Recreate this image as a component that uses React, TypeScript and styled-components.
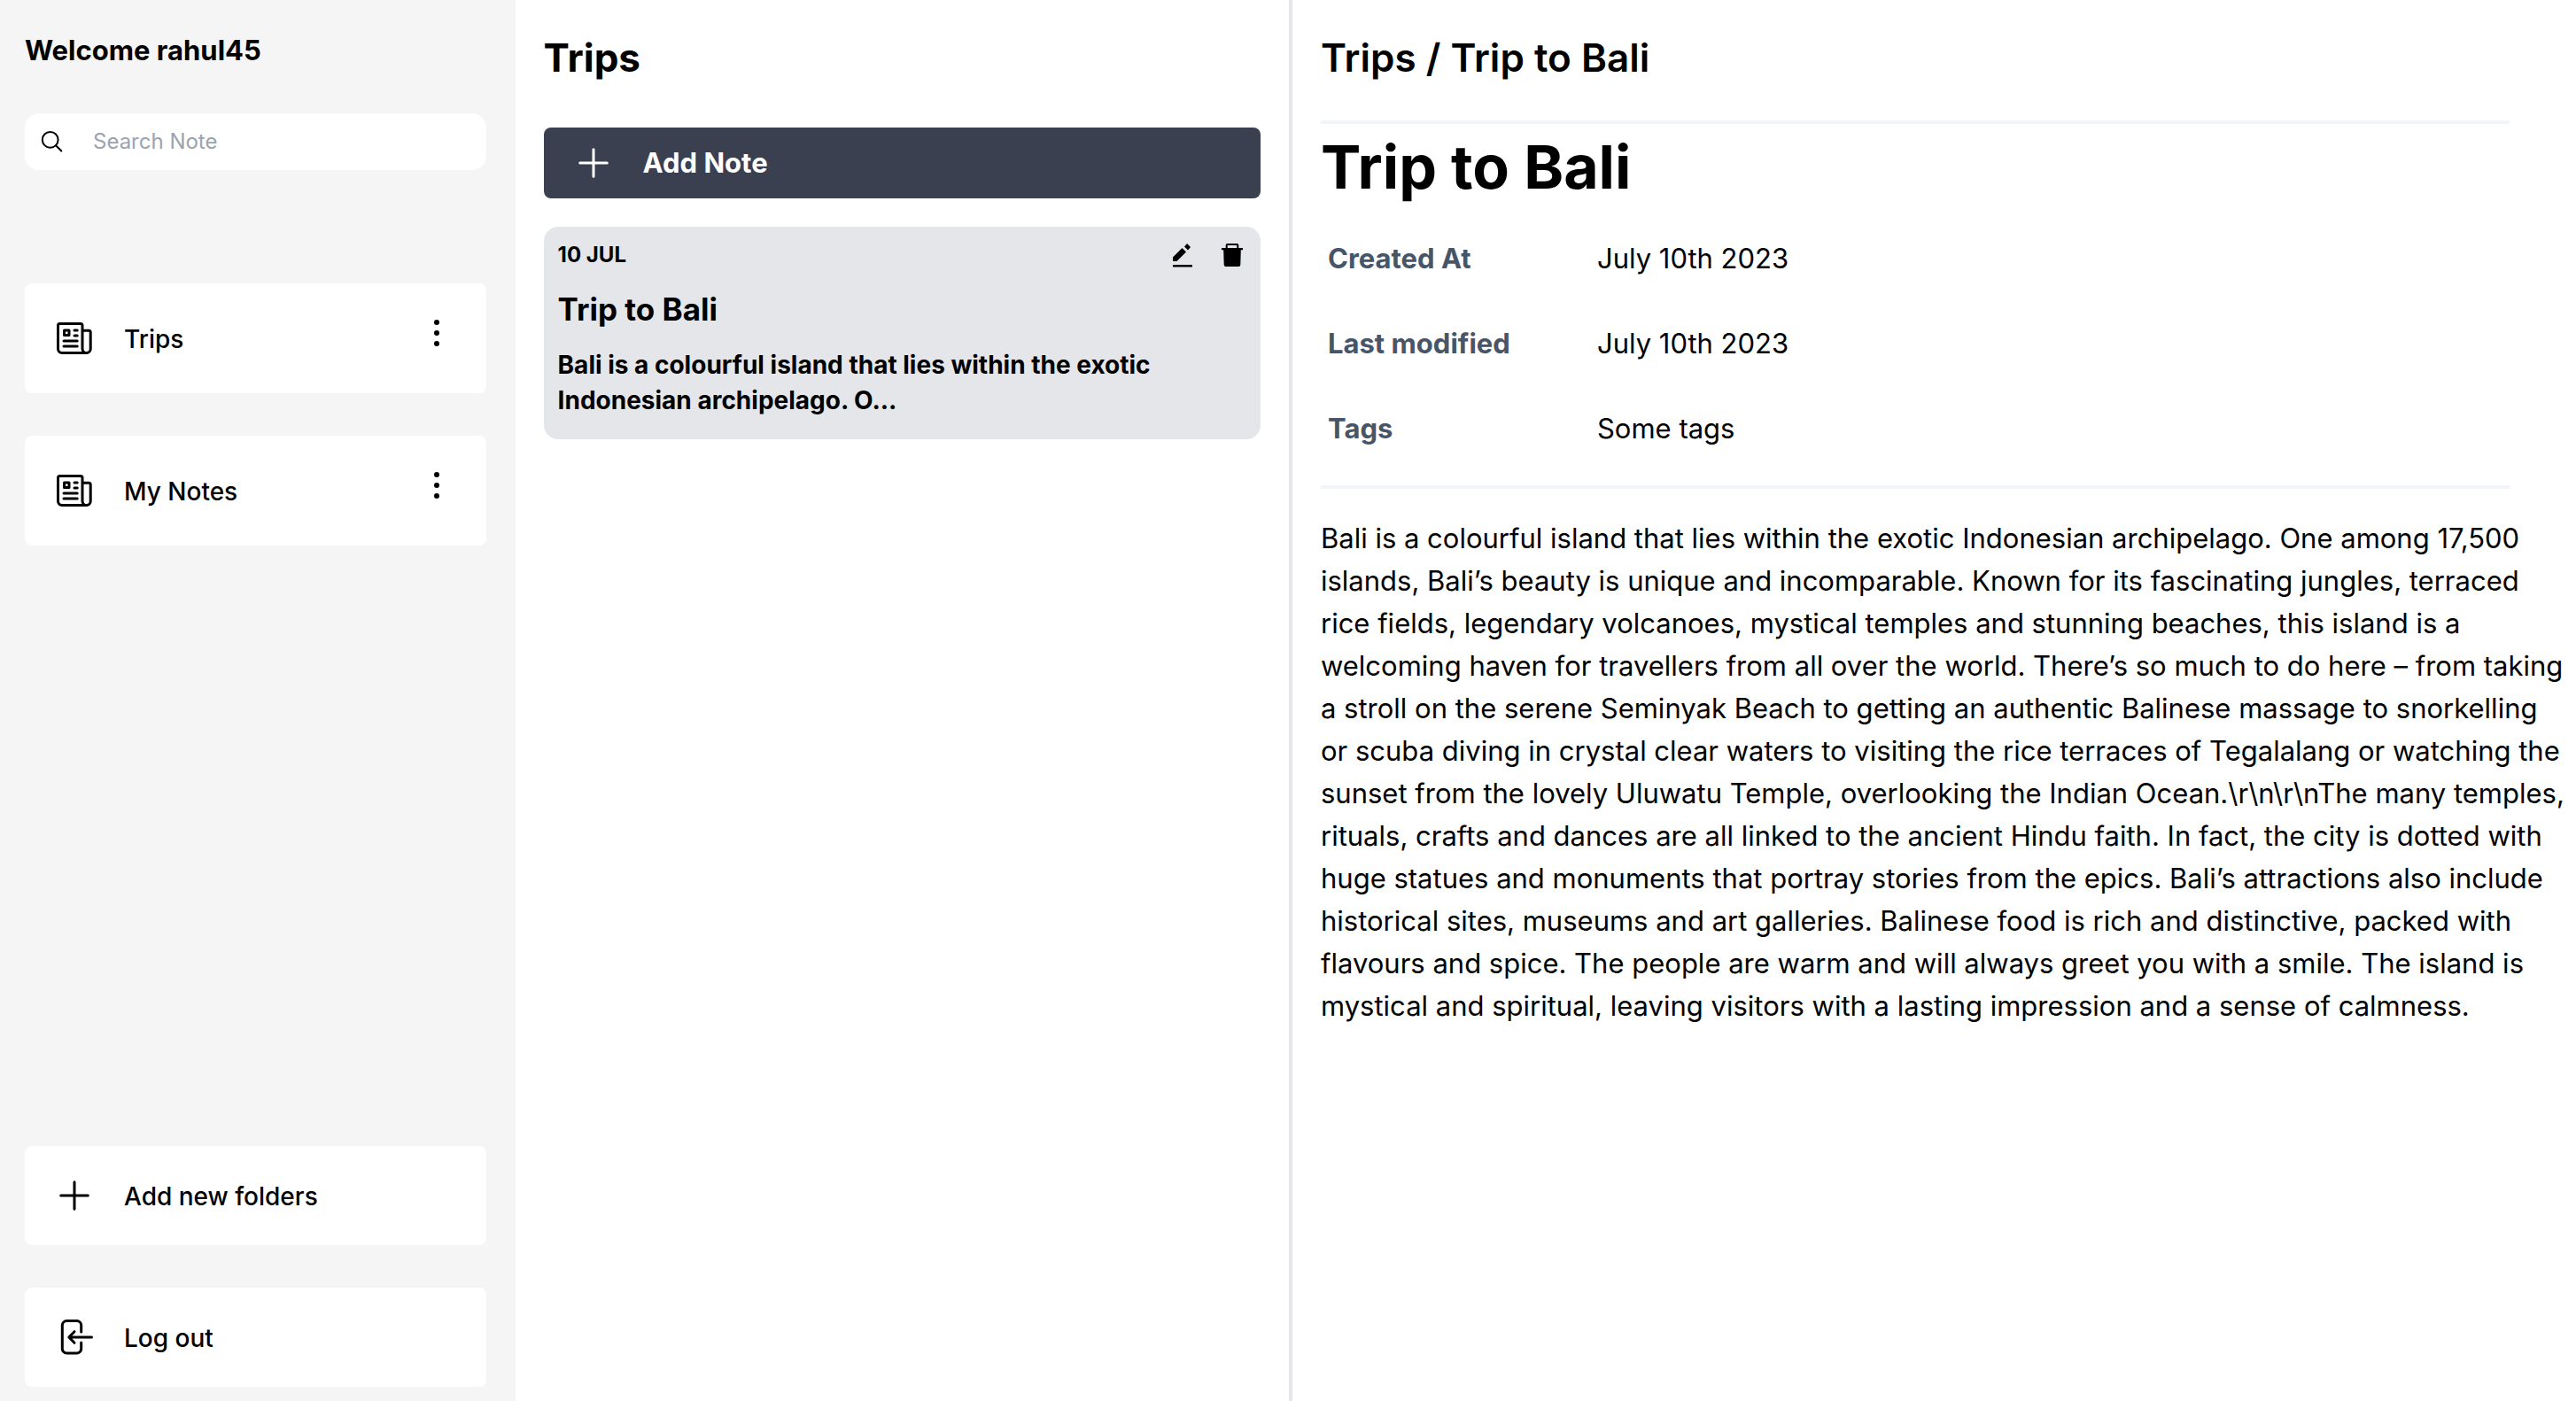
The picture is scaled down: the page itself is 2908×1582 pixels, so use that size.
import React from "react";
import styled, { createGlobalStyle } from "styled-components";

const GlobalStyle = createGlobalStyle`
  *, *::before, *::after { box-sizing: border-box; }
  body {
    margin: 0;
    background: #ffffff;
    color: #000000;
    font-family: Inter, "Liberation Sans", sans-serif;
  }
  h1, h2, h3, p, dl, dd, ul { margin: 0; padding: 0; }
  button, input { font: inherit; color: inherit; border: 0; background: none; padding: 0; }
  button { cursor: pointer; text-align: left; }
`;

const Page = styled.div`
  display: grid;
  grid-template-columns: 20% calc(30% + 1px) 1fr;
  min-height: 100vh;
`;

const Sidebar = styled.aside`
  display: flex;
  flex-direction: column;
  padding: 32px 33px 16px 28px;
  background: #f5f5f5;
`;

const Welcome = styled.h2`
  font-size: 31px;
  line-height: 50px;
  font-weight: 700;
`;

const SearchBox = styled.label`
  display: flex;
  align-items: center;
  gap: 33px;
  height: 64px;
  margin-top: 46px;
  padding: 0 16px;
  border-radius: 16px;
  background: #ffffff;
`;

const SearchInput = styled.input`
  flex: 1;
  min-width: 0;
  font-size: 24px;
  line-height: 32px;
  outline: none;
  &::placeholder { color: #9ca3af; opacity: 1; }
`;

const FolderList = styled.ul`
  display: flex;
  flex-direction: column;
  gap: 48px;
  margin-top: 128px;
  list-style: none;
`;

const FolderItem = styled.li`
  display: flex;
  align-items: center;
  justify-content: space-between;
  height: 124px;
  padding: 0 36px 0 32px;
  border-radius: 8px;
  background: #ffffff;
`;

const FolderButton = styled.button`
  display: flex;
  flex: 1;
  align-items: center;
  gap: 32px;
`;

const Label = styled.span`
  padding-top: 2px;
  font-size: 28px;
  line-height: 40px;
  font-weight: 500;
`;

const MenuButton = styled.button`
  display: flex;
  padding-bottom: 12px;
`;

const SidebarActions = styled.div`
  display: flex;
  flex-direction: column;
  gap: 48px;
  margin-top: auto;
`;

const ActionButton = styled.button`
  display: flex;
  align-items: center;
  gap: 32px;
  height: 112px;
  padding: 0 32px;
  border-radius: 8px;
  background: #ffffff;
`;

const NotesPanel = styled.section`
  display: flex;
  flex-direction: column;
  padding: 32px;
`;

const PanelTitle = styled.h2<{ $weight: number }>`
  margin-bottom: 40px;
  padding-top: 2px;
  font-size: 44px;
  line-height: 62px;
  font-weight: ${({ $weight }) => $weight};
`;

const AddNoteButton = styled.button`
  display: flex;
  align-items: center;
  gap: 32px;
  height: 80px;
  margin: 8px 0 32px;
  padding: 0 32px;
  border-radius: 8px;
  background: #3b4050;
  color: #ffffff;
  font-size: 31px;
  line-height: 48px;
  font-weight: 700;
`;

const NoteCard = styled.article`
  padding: 16px 16px 20px;
  border-radius: 16px;
  background: #e5e6ea;
`;

const NoteHeader = styled.div`
  display: flex;
  align-items: center;
  justify-content: space-between;
  height: 32px;
  font-size: 24px;
  line-height: 32px;
  font-weight: 700;
`;

const NoteTools = styled.div`
  display: flex;
  gap: 24px;
  button { display: flex; }
`;

const NoteTitle = styled.h3`
  margin-top: 16px;
  font-size: 35px;
  line-height: 58px;
  font-weight: 700;
`;

const NoteExcerpt = styled.p`
  margin-top: 14px;
  padding-bottom: 4px;
  font-size: 28px;
  line-height: 40px;
  font-weight: 700;
`;

const Detail = styled.main`
  padding: 32px 4px 32px 32px;
  border-left: 4px solid #e5e7eb;
`;

const Rule = styled.hr`
  width: 95%;
  height: 4px;
  margin: 0;
  border: 0;
  background: #f1f5f9;
`;

const DetailTitle = styled.h1`
  padding: 4px 0 20px;
  font-size: 68px;
  line-height: 88px;
  font-weight: 700;
`;

const Facts = styled.dl`
  display: grid;
  grid-template-columns: 304px 1fr;
  row-gap: 48px;
  padding: 16px 8px 40px;
  font-size: 31px;
  line-height: 48px;
`;

const FactName = styled.dt`
  color: #475569;
  font-weight: 700;
`;

const Body = styled.p`
  padding: 32px 8px 0 0;
  font-size: 31px;
  line-height: 48px;
`;

const SearchIcon = () => (
  <svg width="28" height="28" viewBox="0 0 28 28" fill="none" stroke="currentColor" strokeWidth="2" strokeLinecap="round" aria-hidden="true">
    <circle cx="12.700" cy="11.800" r="8.900" />
    <path d="M19 18.200l6.300 6.300" />
  </svg>
);

const NewspaperIcon = () => (
  <svg width="48" height="48" viewBox="0 0 48 48" fill="none" stroke="currentColor" strokeWidth="3" strokeLinecap="round" strokeLinejoin="round" aria-hidden="true">
    <path d="M38 40.500H10a4.500 4.500 0 0 1-4.500-4.500V9.500a2 2 0 0 1 2-2h23.500a2 2 0 0 1 2 2V36a4.500 4.500 0 0 0 4.700 4.500a4.500 4.500 0 0 0 4.500-4.500V17.300a2 2 0 0 0-2-2h-7" />
    <path d="M12.500 15h5.500v5.500h-5.500zM24 15h3.200M24 21h3.200M12 27h15.200M12 33h15.200" />
  </svg>
);

const PlusIcon = () => (
  <svg width="48" height="48" viewBox="0 0 48 48" fill="none" stroke="currentColor" strokeWidth="3" strokeLinecap="round" aria-hidden="true">
    <path d="M24 8.700v30.600M8.700 24h30.600" />
  </svg>
);

const LogoutIcon = () => (
  <svg width="48" height="48" viewBox="0 0 48 48" fill="none" stroke="currentColor" strokeWidth="3" strokeLinecap="round" strokeLinejoin="round" aria-hidden="true">
    <path d="M31.700 18V10.500a5 5 0 0 0-5-5H15.300a5 5 0 0 0-5 5v26.500a5 5 0 0 0 5 5h11.400a5 5 0 0 0 5-5v-7" />
    <path d="M43.500 24H18.500M24 17.700l-6.200 6.300l6.200 6.300" />
  </svg>
);

const DotsIcon = () => (
  <svg width="40" height="40" viewBox="0 0 40 40" fill="currentColor" aria-hidden="true">
    <circle cx="20" cy="8" r="3" />
    <circle cx="20" cy="20" r="3" />
    <circle cx="20" cy="32" r="3" />
  </svg>
);

const EditIcon = () => (
  <svg width="32" height="32" viewBox="0 0 32 32" fill="currentColor" aria-hidden="true">
    <path d="M5 27h22v2.500H5zM5 18.500V23h4.500L20 12.500L15.500 8zM18 6.500L22 10.500L25 7L21 3z" />
  </svg>
);

const TrashIcon = () => (
  <svg width="32" height="32" viewBox="0 0 32 32" aria-hidden="true">
    <path d="M9.700 8.500V5a1 1 0 0 1 1-1h10.600a1 1 0 0 1 1 1v3.500" fill="none" stroke="currentColor" strokeWidth="2" />
    <path d="M4 8h24v2.200h-2.200L25.300 27a2 2 0 0 1-2 2H8.700a2 2 0 0 1-2-2L6.200 10.200H4z" fill="currentColor" />
  </svg>
);

const folders = ["Trips", "My Notes"];

const facts = [
  { name: "Created At", value: "July 10th 2023" },
  { name: "Last modified", value: "July 10th 2023" },
  { name: "Tags", value: "Some tags" },
];

const content =
  "Bali is a colourful island that lies within the exotic Indonesian archipelago. One among 17,500 islands, Bali’s beauty is unique and incomparable. Known for its fascinating jungles, terraced rice fields, legendary volcanoes, mystical temples and stunning beaches, this island is a welcoming haven for travellers from all over the world. There’s so much to do here – from taking a stroll on the serene Seminyak Beach to getting an authentic Balinese massage to snorkelling or scuba diving in crystal clear waters to visiting the rice terraces of Tegalalang or watching the sunset from the lovely Uluwatu Temple, overlooking the Indian Ocean.\\r\\n\\r\\nThe many temples, rituals, crafts and dances are all linked to the ancient Hindu faith. In fact, the city is dotted with huge statues and monuments that portray stories from the epics. Bali’s attractions also include historical sites, museums and art galleries. Balinese food is rich and distinctive, packed with flavours and spice. The people are warm and will always greet you with a smile. The island is mystical and spiritual, leaving visitors with a lasting impression and a sense of calmness.";

export default function App() {
  return (
    <>
      <GlobalStyle />
      <Page>
        <Sidebar>
          <Welcome>Welcome rahul45</Welcome>
          <SearchBox>
            <SearchIcon />
            <SearchInput type="text" placeholder="Search Note" aria-label="Search Note" />
          </SearchBox>
          <FolderList>
            {folders.map((name) => (
              <FolderItem key={name}>
                <FolderButton type="button">
                  <NewspaperIcon />
                  <Label>{name}</Label>
                </FolderButton>
                <MenuButton type="button" aria-label={`Options for ${name}`}>
                  <DotsIcon />
                </MenuButton>
              </FolderItem>
            ))}
          </FolderList>
          <SidebarActions>
            <ActionButton type="button">
              <PlusIcon />
              <Label>Add new folders</Label>
            </ActionButton>
            <ActionButton type="button">
              <LogoutIcon />
              <Label>Log out</Label>
            </ActionButton>
          </SidebarActions>
        </Sidebar>

        <NotesPanel>
          <PanelTitle $weight={700}>Trips</PanelTitle>
          <AddNoteButton type="button">
            <PlusIcon />
            Add Note
          </AddNoteButton>
          <NoteCard>
            <NoteHeader>
              <span>10 JUL</span>
              <NoteTools>
                <button type="button" aria-label="Edit note">
                  <EditIcon />
                </button>
                <button type="button" aria-label="Delete note">
                  <TrashIcon />
                </button>
              </NoteTools>
            </NoteHeader>
            <NoteTitle>Trip to Bali</NoteTitle>
            <NoteExcerpt>Bali is a colourful island that lies within the exotic Indonesian archipelago. O...</NoteExcerpt>
          </NoteCard>
        </NotesPanel>

        <Detail>
          <PanelTitle $weight={600}>Trips / Trip to Bali</PanelTitle>
          <Rule />
          <DetailTitle>Trip to Bali</DetailTitle>
          <Facts>
            {facts.map(({ name, value }) => (
              <React.Fragment key={name}>
                <FactName>{name}</FactName>
                <dd>{value}</dd>
              </React.Fragment>
            ))}
          </Facts>
          <Rule />
          <Body>{content}</Body>
        </Detail>
      </Page>
    </>
  );
}
